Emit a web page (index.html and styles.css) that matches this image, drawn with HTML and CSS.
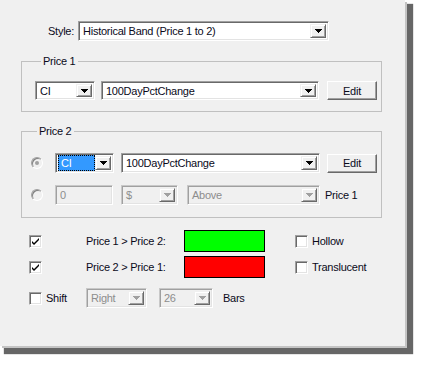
FILE: index.html
```html
<!DOCTYPE html>
<html lang="en">
<head>
    <meta charset="UTF-8">
    <title>Historical Band</title>
    <link rel="stylesheet" href="styles.css">
</head>
<body>
<div class="dlg">
    <div class="row style-row">
        <span class="lbl">Style:</span>
        <div class="sel w-style">
            <span class="val">Historical Band (Price 1 to 2)</span>
            <span class="arr"><svg width="7" height="4"><path d="M0 0h7v1h-1v1h-1v1h-1v1h-1v-1h-1v-1h-1v-1h-1z"/></svg></span>
        </div>
    </div>

    <fieldset class="group g1">
        <legend>Price 1</legend>
        <div class="row">
            <div class="sel short w-ci">
                <span class="val">CI</span>
                <span class="arr"><svg width="7" height="4"><path d="M0 0h7v1h-1v1h-1v1h-1v1h-1v-1h-1v-1h-1v-1h-1z"/></svg></span>
            </div>
            <div class="sel short w-fld">
                <span class="val">100DayPctChange</span>
                <span class="arr"><svg width="7" height="4"><path d="M0 0h7v1h-1v1h-1v1h-1v1h-1v-1h-1v-1h-1v-1h-1z"/></svg></span>
            </div>
            <button class="btn">Edit</button>
        </div>
    </fieldset>

    <fieldset class="group g2">
        <legend>Price 2</legend>
        <div class="row">
            <span class="radio on"></span>
            <div class="sel w-ci2">
                <span class="val"><span class="hl">CI</span></span>
                <span class="arr"><svg width="7" height="4"><path d="M0 0h7v1h-1v1h-1v1h-1v1h-1v-1h-1v-1h-1v-1h-1z"/></svg></span>
            </div>
            <div class="sel w-fld2">
                <span class="val">100DayPctChange</span>
                <span class="arr"><svg width="7" height="4"><path d="M0 0h7v1h-1v1h-1v1h-1v1h-1v-1h-1v-1h-1v-1h-1z"/></svg></span>
            </div>
            <button class="btn">Edit</button>
        </div>
        <div class="row r2">
            <span class="radio"></span>
            <div class="sel dis w-num"><span class="val">0</span></div>
            <div class="sel dis w-cur">
                <span class="val">$</span>
                <span class="arr"><svg width="7" height="4"><path d="M0 0h7v1h-1v1h-1v1h-1v1h-1v-1h-1v-1h-1v-1h-1z"/></svg></span>
            </div>
            <div class="sel dis w-cmp">
                <span class="val">Above</span>
                <span class="arr"><svg width="7" height="4"><path d="M0 0h7v1h-1v1h-1v1h-1v1h-1v-1h-1v-1h-1v-1h-1z"/></svg></span>
            </div>
            <span class="lbl">Price 1</span>
        </div>
    </fieldset>

    <div class="row opt first">
        <span class="chk on"><svg width="9" height="9"><path d="M1 4l2 2l5-5v2l-5 5l-2-2z"/></svg></span>
        <span class="opt-lbl">Price 1 &gt; Price 2:</span>
        <span class="swatch green"></span>
        <span class="chk right"></span>
        <span class="lbl">Hollow</span>
    </div>
    <div class="row opt">
        <span class="chk on"><svg width="9" height="9"><path d="M1 4l2 2l5-5v2l-5 5l-2-2z"/></svg></span>
        <span class="opt-lbl">Price 2 &gt; Price 1:</span>
        <span class="swatch red"></span>
        <span class="chk right"></span>
        <span class="lbl">Translucent</span>
    </div>
    <div class="row opt shift">
        <span class="chk"></span>
        <span class="lbl shift-lbl">Shift</span>
        <div class="sel dis w-dir">
            <span class="val">Right</span>
            <span class="arr"><svg width="7" height="4"><path d="M0 0h7v1h-1v1h-1v1h-1v1h-1v-1h-1v-1h-1v-1h-1z"/></svg></span>
        </div>
        <div class="sel dis w-bars">
            <span class="val">26</span>
            <span class="arr"><svg width="7" height="4"><path d="M0 0h7v1h-1v1h-1v1h-1v1h-1v-1h-1v-1h-1v-1h-1z"/></svg></span>
        </div>
        <span class="lbl">Bars</span>
    </div>
</div>
</body>
</html>
```

FILE: styles.css
```css
*{
    margin: 0;
    padding: 0;
    box-sizing: border-box;
}
html,body{
    background: #fff;
}
body{
    min-height: 365px;
    padding-bottom: 19px;
    font-family: "Liberation Sans", Arial, sans-serif;
    font-size: 11px;
    letter-spacing: -0.25px;
    color: #0a0a1a;
}
.dlg{
    width: 405px;
    height: 346px;
    background: #f0f0f0;
    overflow: hidden;
    box-shadow: 2px 2px 0 #c4c4c4, 6px 6px 1px 2px #666;
}
.row{
    display: flex;
    align-items: center;
}
.style-row{
    padding: 21px 0 0 48px;
}
.style-row .lbl{
    margin-right: 4px;
}

/* combo boxes */
.sel{
    display: flex;
    align-items: center;
    height: 20px;
    background: #fff;
    border: 1px solid;
    border-color: #a0a0a0 #fff #fff #a0a0a0;
    box-shadow: inset 1px 1px 0 #696969, inset -1px -1px 0 #e3e3e3;
    padding: 2px;
    flex: none;
}
.sel.short{
    height: 19px;
}
.sel .val{
    flex: 1;
    padding-left: 2px;
    white-space: nowrap;
    overflow: hidden;
    line-height: 14px;
}
.sel .arr{
    width: 16px;
    height: 100%;
    flex: none;
    display: flex;
    align-items: center;
    justify-content: center;
    background: #f0f0f0;
    border: 1px solid;
    border-color: #f0f0f0 #696969 #696969 #f0f0f0;
    box-shadow: inset 1px 1px 0 #fff, inset -1px -1px 0 #a0a0a0;
}
.sel .arr svg{
    shape-rendering: crispEdges;
    fill: #000;
}
.sel.dis{
    background: #f0f0f0;
    color: #8d8d8d;
    border-color: #c8c8c8 #fff #fff #c8c8c8;
    box-shadow: inset 1px 1px 0 #a0a0a0, inset -1px -1px 0 #e3e3e3;
}
.sel.dis .arr svg{
    fill: #a0a0a0;
}
.sel .hl{
    display: block;
    margin-left: -2px;
    padding-left: 2px;
    background: #39f;
    color: #fff;
    border: 1px dotted #000;
    line-height: 14px;
}
.w-style{ width: 251px; }
.w-ci{ width: 60px; margin-right: 6px; }
.w-fld{ width: 218px; margin-right: 8px; }
.w-ci2{ width: 59px; margin-right: 7px; }
.w-fld2{ width: 199px; margin-right: 7px; }
.w-num{ width: 58px; margin-right: 8px; }
.w-cur{ width: 57px; margin-right: 9px; }
.w-cmp{ width: 133px; margin-right: 5px; }
.w-dir{ width: 61px; margin-right: 12px; }
.w-bars{ width: 54px; margin-right: 10px; }

.btn{
    width: 50px;
    height: 19px;
    font: inherit;
    letter-spacing: inherit;
    color: inherit;
    background: #f0f0f0;
    border: 1px solid;
    border-color: #fff #696969 #696969 #fff;
    box-shadow: inset -1px -1px 0 #a0a0a0;
}

/* group boxes */
.group{
    width: 361px;
    margin: 13px 0 0 21px;
    border: 1px solid #c0c0c0;
    min-width: 0;
}
.group legend{
    margin-left: 6px;
    padding: 0 2px;
    line-height: 14px;
}
.g1{
    padding: 13px 0 11px 13px;
}
.g2{
    margin-top: 12px;
    padding: 15px 0 12px 9px;
}
.r2{
    margin-top: 12px;
}

.radio{
    width: 12px;
    height: 12px;
    margin-right: 12px;
    border-radius: 50%;
    border: 1px solid;
    border-color: #a0a0a0 #fff #fff #a0a0a0;
    box-shadow: inset 1px 1px 0 #808080;
    background: #f0f0f0;
    display: flex;
    align-items: center;
    justify-content: center;
    flex: none;
}
.radio.on::after{
    content: "";
    width: 4px;
    height: 4px;
    border-radius: 50%;
    background: #a0a0a0;
}

/* bottom options */
.opt{
    padding-left: 29px;
    margin-top: 4px;
    height: 22px;
}
.opt.first{
    margin-top: 12px;
}
.opt.shift{
    margin-top: 10px;
    height: 20px;
}
.chk{
    width: 13px;
    height: 13px;
    flex: none;
    background: #fff;
    border: 1px solid;
    border-color: #a0a0a0 #fff #fff #a0a0a0;
    box-shadow: inset 1px 1px 0 #696969, inset -1px -1px 0 #e3e3e3;
    display: flex;
    align-items: center;
    justify-content: center;
}
.chk svg{
    fill: #000;
}
.opt .chk:first-child{
    margin-right: 44px;
}
.opt.shift .chk:first-child{
    margin-right: 4px;
}
.opt-lbl{
    width: 98px;
}
.swatch{
    width: 81px;
    height: 22px;
    border: 1px solid #000;
    margin-right: 30px;
}
.green{ background: #0f0; }
.red{ background: #f00; }
.chk.right{
    margin-right: 4px;
}
.shift-lbl{
    width: 40px;
}
```
